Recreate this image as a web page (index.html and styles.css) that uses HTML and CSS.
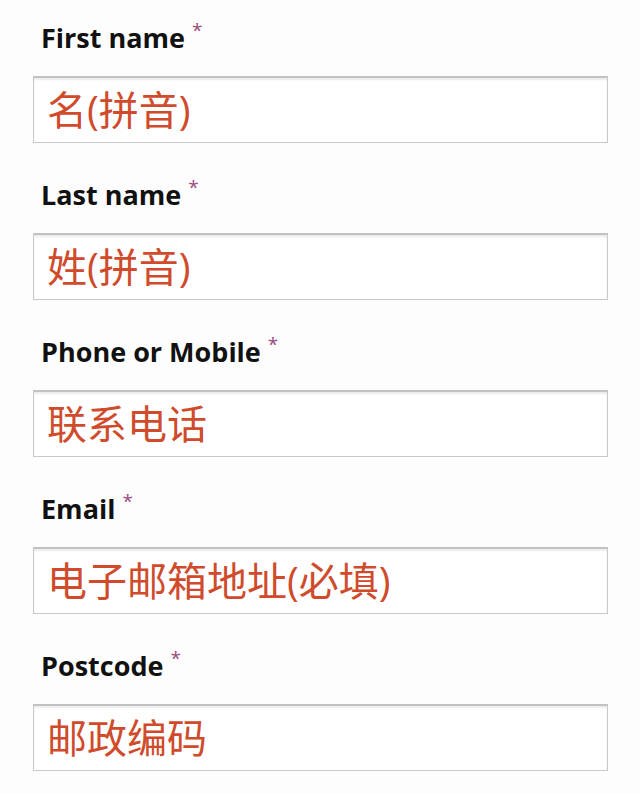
FILE: index.html
```html
<!DOCTYPE html>
<html lang="zh">
<head>
<meta charset="utf-8">
<link rel="stylesheet" href="styles.css">
</head>
<body>
<form class="form">
  <div class="field">
    <div class="label">First name <span class="req">*</span></div>
    <div class="control">名(拼音)</div>
  </div>
  <div class="field">
    <div class="label">Last name <span class="req">*</span></div>
    <div class="control">姓(拼音)</div>
  </div>
  <div class="field">
    <div class="label">Phone or Mobile <span class="req">*</span></div>
    <div class="control">联系电话</div>
  </div>
  <div class="field">
    <div class="label">Email <span class="req">*</span></div>
    <div class="control">电子邮箱地址(必填)</div>
  </div>
  <div class="field">
    <div class="label">Postcode <span class="req">*</span></div>
    <div class="control">邮政编码</div>
  </div>
</form>
</body>
</html>
```
FILE: styles.css
```css
html, body {
  margin: 0;
  padding: 0;
  background: #fefdfd;
}
.form {
  padding: 23px 0 0 33px;
  width: 575px;
}
.field {
  margin-bottom: 37px;
}
.label {
  font-family: "Open Sans", "Noto Sans", sans-serif;
  font-weight: 700;
  font-size: 27px;
  line-height: 30px;
  height: 30px;
  color: #111;
  padding-left: 8px;
  margin-bottom: 23px;
  white-space: nowrap;
}
.req {
  color: #9a4a7c;
  font-weight: 400;
  font-size: 19px;
  line-height: 0;
  vertical-align: 11px;
}
.control {
  box-sizing: border-box;
  height: 67px;
  border: 1px solid #c9c9c9;
  border-top: 2px solid #c2c2c2;
  box-shadow: inset 0 2px 2px rgba(0,0,0,0.08);
  background: #fff;
  display: flex;
  align-items: center;
  padding-left: 13px;
  font-family: "Open Sans", "Noto Sans CJK SC", sans-serif;
  font-size: 40px;
  line-height: 1;
  color: #cf4b2c;
  white-space: nowrap;
}
```
